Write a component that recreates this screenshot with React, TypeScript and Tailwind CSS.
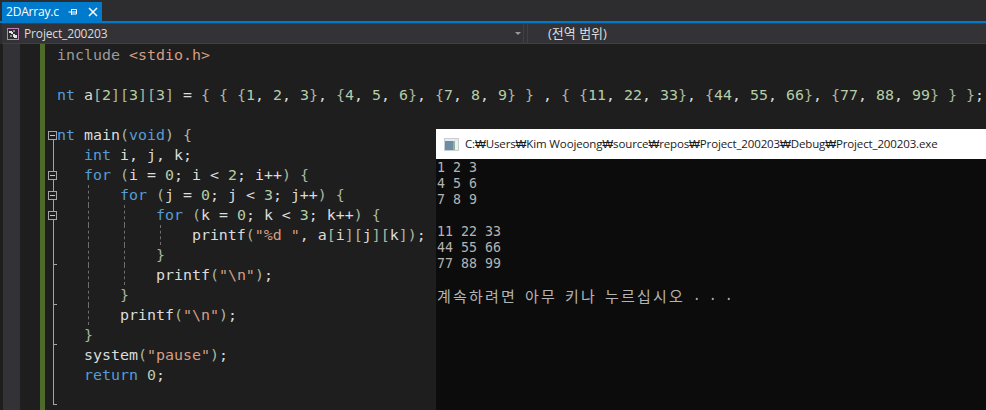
import type { ReactNode } from 'react';

const K = ({ children }: { children: ReactNode }) => <span className="text-[#569cd6]">{children}</span>;
const N = ({ children }: { children: ReactNode }) => <span className="text-[#b5cea8]">{children}</span>;
const S = ({ children }: { children: ReactNode }) => <span className="text-[#d69d85]">{children}</span>;
const P = ({ children }: { children: ReactNode }) => <span className="text-[#a9b7a0]">{children}</span>;

type Fold = 'none' | 'open' | 'box' | 'line' | 'end';

interface Line {
  fold: Fold;
  guides?: string[];
  code: ReactNode;
}

const lines: Line[] = [
  { fold: 'none', code: <><span className="text-[#9b9b9b]"> include</span> <S>&lt;stdio.h&gt;</S></> },
  { fold: 'none', code: '' },
  {
    fold: 'none',
    code: (
      <>
        {' '}<K>nt</K> a<P>[</P><N>2</N><P>][</P><N>3</N><P>][</P><N>3</N><P>]</P> = <P>{'{ { {'}</P>
        <N>1</N>, <N>2</N>, <N>3</N><P>{'}'}</P>, <P>{'{'}</P><N>4</N>, <N>5</N>, <N>6</N><P>{'}'}</P>, <P>{'{'}</P>
        <N>7</N>, <N>8</N>, <N>9</N><P>{'} }'}</P> , <P>{'{ {'}</P><N>11</N>, <N>22</N>, <N>33</N><P>{'}'}</P>, <P>{'{'}</P>
        <N>44</N>, <N>55</N>, <N>66</N><P>{'}'}</P>, <P>{'{'}</P><N>77</N>, <N>88</N>, <N>99</N><P>{'} } }'}</P>;
      </>
    ),
  },
  { fold: 'none', code: '' },
  { fold: 'open', code: <>{' '}<K>nt</K> main<P>(</P><K>void</K><P>)</P> <P>{'{'}</P></> },
  { fold: 'line', code: <>{'    '}<K>int</K> i, j, k;</> },
  { fold: 'box', code: <>{'    '}<K>for</K> <P>(</P>i = <N>0</N>; i &lt; <N>2</N>; i++<P>)</P> <P>{'{'}</P></> },
  { fold: 'box', guides: ['left-[40px]'], code: <>{'        '}<K>for</K> <P>(</P>j = <N>0</N>; j &lt; <N>3</N>; j++<P>)</P> <P>{'{'}</P></> },
  { fold: 'box', guides: ['left-[40px]', 'left-[76px]'], code: <>{'            '}<K>for</K> <P>(</P>k = <N>0</N>; k &lt; <N>3</N>; k++<P>)</P> <P>{'{'}</P></> },
  { fold: 'line', guides: ['left-[40px]', 'left-[76px]', 'left-[112px]'], code: <>{'                '}printf<P>(</P><S>"%d "</S>, a<P>[</P>i<P>][</P>j<P>][</P>k<P>])</P>;</> },
  { fold: 'end', guides: ['left-[40px]', 'left-[76px]'], code: <>{'            '}<P>{'}'}</P></> },
  { fold: 'line', guides: ['left-[40px]', 'left-[76px]'], code: <>{'            '}printf<P>(</P><S>"\n"</S><P>)</P>;</> },
  { fold: 'end', guides: ['left-[40px]'], code: <>{'        '}<P>{'}'}</P></> },
  { fold: 'line', guides: ['left-[40px]'], code: <>{'        '}printf<P>(</P><S>"\n"</S><P>)</P>;</> },
  { fold: 'end', code: <>{'    '}<P>{'}'}</P></> },
  { fold: 'line', code: <>{'    '}system<P>(</P><S>"pause"</S><P>)</P>;</> },
  { fold: 'line', code: <>{'    '}<K>return</K> <N>0</N>;</> },
  { fold: 'end', code: '' },
];

function FoldMark({ fold }: { fold: Fold }) {
  return (
    <div className="relative h-5 w-2.5">
      {(fold === 'line' || fold === 'end' || fold === 'box') && (
        <div className="absolute left-[5px] top-0 h-5 w-px bg-[#a5a5a5]" />
      )}
      {fold === 'open' && <div className="absolute left-[5px] top-[14px] h-1.5 w-px bg-[#a5a5a5]" />}
      {(fold === 'open' || fold === 'box') && (
        <div className="absolute left-0 top-[6px] flex h-[9px] w-[9px] items-center justify-center border border-[#a5a5a5] bg-[#1e1e1e]">
          <div className="h-px w-[5px] bg-[#c8c8c8]" />
        </div>
      )}
      {fold === 'end' && <div className="absolute left-[5px] top-[19px] h-px w-1 bg-[#a5a5a5]" />}
    </div>
  );
}

function ProjectIcon() {
  return (
    <svg width="12" height="12" viewBox="0 0 12 12" className="shrink-0">
      <rect x="0.5" y="0.5" width="11" height="11" fill="#2d2d30" stroke="#c27fc0" />
      <path d="M2 3h3v1h1v2h-2v-1h-2z M6 6h2v1h2v3h-3v-1h-1z" fill="#e4e4e4" />
      <path d="M6 2h2v2h-2z M3 7h2v2h-2z" fill="#8a8a8a" />
    </svg>
  );
}

function ConsoleIcon() {
  return (
    <svg width="15" height="13" viewBox="0 0 15 13" className="shrink-0">
      <rect x="0" y="0" width="15" height="13" fill="#c9ced3" />
      <rect x="1" y="1" width="13" height="2" fill="#e8eaec" />
      <rect x="1" y="3" width="8" height="9" fill="#6f8ca5" />
      <rect x="9" y="3" width="2" height="9" fill="#8fb596" />
      <rect x="11" y="3" width="3" height="9" fill="#eef1f0" />
    </svg>
  );
}

export default function App() {
  return (
    <div className="relative flex h-[410px] w-[986px] flex-col overflow-hidden bg-[#2d2d30] font-['Liberation_Sans',sans-serif]">
      {/* Tab strip */}
      <div className="flex h-[21px] items-end pl-[2px]">
        <div className="flex h-[19px] w-[100px] items-center bg-[#007acc] pl-1 text-white">
          <span className="w-[55px] font-['Open_Sans',sans-serif] text-xs tracking-[-0.2px]">2DArray.c</span>
          <svg width="10" height="10" viewBox="0 0 10 10" className="ml-[7px]">
            <path d="M0.5 5h3M3.5 2v6M3.5 2.500h5v4.500h-5M3.500 5h5" stroke="#fff" fill="none" />
          </svg>
          <svg width="10" height="10" viewBox="0 0 10 10" className="ml-[10px]">
            <path d="M1 1l8 8M9 1l-8 8" stroke="#fff" strokeWidth="1.5" />
          </svg>
        </div>
      </div>
      <div className="h-0.5 bg-[#007acc]" />

      {/* Navigation bar */}
      <div className="ml-[2px] flex h-[21px] items-center border-y border-[#3f3f46] bg-[#333337] pl-[5px] font-['Open_Sans','Noto_Sans_CJK_KR',sans-serif] text-xs text-[#dcdcdc]">
        <div className="flex w-[508px] items-center gap-[5px]">
          <ProjectIcon />
          <span className="tracking-[-0.15px]">Project_200203</span>
        </div>
        <div className="h-0 w-0 border-x-[3px] border-t-[3px] border-x-transparent border-t-[#999999]" />
        <div className="ml-[2px] h-full w-px bg-[#3f3f46]" />
        <div className="ml-[3px] h-full w-px bg-[#3f3f46]" />
        <span className="ml-[20px] text-[13px]">(전역 범위)</span>
      </div>

      {/* Editor */}
      <div className="flex flex-1 overflow-hidden bg-[#1e1e1e]">
        <div className="ml-[3px] w-[17px] bg-[#333337]" />
        <div className="w-5 bg-[#1e1e1e]" />
        <div className="w-[5px] bg-[#4f6b2c]" />
        <div className="ml-[3px] w-0 pt-px">
          {lines.map((line, i) => (
            <FoldMark key={i} fold={line.fold} />
          ))}
        </div>
        <div className="pt-px font-['DejaVu_Sans_Mono',monospace] text-[14.95px] leading-5 whitespace-pre text-[#dcdcdc]">
          {lines.map((line, i) => (
            <div key={i} className="relative h-5">
              {line.guides?.map((g) => (
                <div key={g} className={`absolute top-0 h-5 border-l border-dashed border-[#6e6e6e] ${g}`} />
              ))}
              {line.code}
            </div>
          ))}
        </div>
      </div>

      {/* Console window */}
      <div className="absolute left-[436px] top-[129px] flex h-[281px] w-[550px] flex-col">
        <div className="flex h-[30px] items-center bg-white pl-[8px] text-[#1a1a1a]">
          <ConsoleIcon />
          <span className="ml-[6px] font-['Open_Sans',sans-serif] text-[11.5px] tracking-[-0.13px]">
            C:₩Users₩Kim Woojeong₩source₩repos₩Project_200203₩Debug₩Project_200203.exe
          </span>
        </div>
        <div className="flex-1 whitespace-pre bg-[#0c0c0c] pl-px pt-px font-['DejaVu_Sans_Mono',monospace] text-[13.28px] leading-4 text-[#b4b4b4]">
          <div>1 2 3</div>
          <div>4 5 6</div>
          <div>7 8 9</div>
          <div className="h-4" />
          <div>11 22 33</div>
          <div>44 55 66</div>
          <div>77 88 99</div>
          <div className="h-4" />
          <div className="flex h-4 items-center">
            <span className="font-['Noto_Sans_CJK_KR',sans-serif] text-[15px] leading-4 tracking-[2.2px] [word-spacing:2.4px]">
              계속하려면 아무 키나 누르십시오{' '}
            </span>
            <span>. . .</span>
          </div>
        </div>
      </div>
    </div>
  );
}
